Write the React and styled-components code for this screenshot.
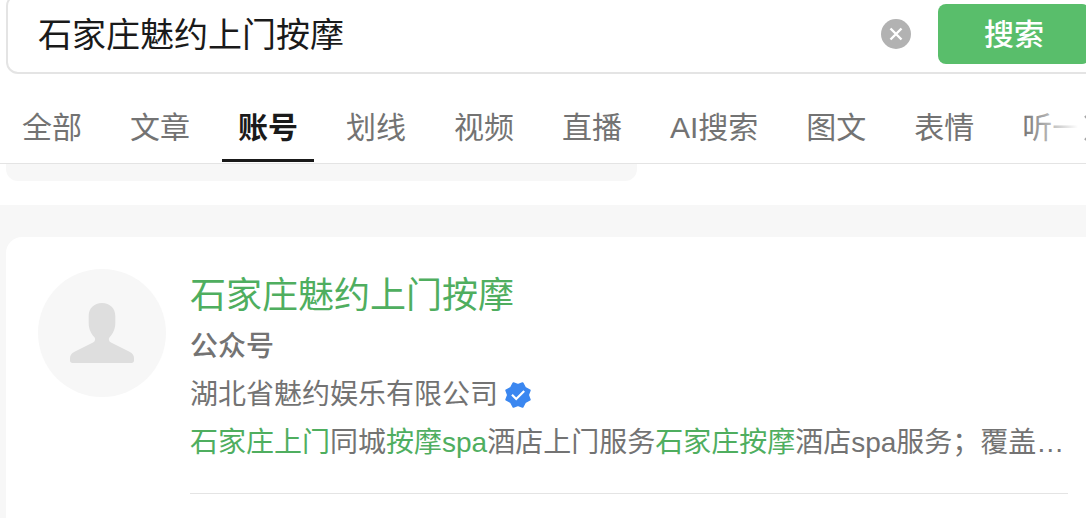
import styled, { createGlobalStyle } from "styled-components";

const GlobalStyle = createGlobalStyle`
  * {
    box-sizing: border-box;
  }

  body {
    margin: 0;
    overflow: hidden;
    background-color: #f7f7f7;
    color: #737373;
    font-family: "Liberation Sans", "Noto Sans CJK SC", sans-serif;
  }

  button,
  input {
    font-family: inherit;
    border: none;
    padding: 0;
    margin: 0;
  }
`;

const Page = styled.div`
  min-height: 100vh;
  display: flex;
  flex-direction: column;
`;

const Header = styled.header`
  background-color: #fff;
  border-bottom: 1px solid #e4e4e4;
`;

const SearchBox = styled.form`
  display: flex;
  align-items: center;
  height: 80px;
  margin: -6px -14px 0 6px;
  padding: 0 8px 0 30px;
  border: 2px solid #e4e4e4;
  border-radius: 12px;
`;

const SearchInput = styled.input`
  flex: 1;
  min-width: 0;
  height: 60px;
  padding-bottom: 4px;
  font-size: 34px;
  color: #1a1a1a;
  background: none;
  outline: none;
`;

const ClearButton = styled.button`
  display: flex;
  width: 30px;
  height: 30px;
  margin-right: 27px;
  background: none;
  cursor: pointer;
`;

const SearchButton = styled.button`
  width: 152px;
  height: 60px;
  padding-bottom: 4px;
  border-radius: 8px;
  background-color: #59be6b;
  color: #fff;
  font-size: 30px;
  font-weight: 500;
  cursor: pointer;
`;

const Tabs = styled.nav`
  position: relative;
  display: flex;
  gap: 16px;
  height: 89px;
  padding: 20px 0 1px 6px;
  overflow: hidden;
`;

const TabLink = styled.a`
  flex: none;
  padding: 0 16px;
  font-size: 30px;
  line-height: 68px;
  white-space: nowrap;
  text-decoration: none;
  color: ${({ $active }) => ($active ? "#1a1a1a" : "#737373")};
  font-weight: ${({ $active }) => ($active ? 700 : 400)};
  border-bottom: 3px solid ${({ $active }) => ($active ? "#1a1a1a" : "transparent")};
`;

const TabsFade = styled.div`
  position: absolute;
  top: 0;
  right: 8px;
  width: 56px;
  height: 86px;
  background: linear-gradient(to right, rgba(255, 255, 255, 0), #fff);
`;

const MoreButton = styled.button`
  position: absolute;
  top: 38px;
  right: -16px;
  display: flex;
  width: 24px;
  height: 32px;
  background-color: #fff;
  cursor: pointer;
`;

const Previous = styled.section`
  background-color: #fff;
  padding: 0 10px 24px 6px;
`;

const PreviousBlock = styled.div`
  width: 59%;
  height: 17px;
  border-radius: 0 0 12px 12px;
  background-color: #f7f7f7;
`;

const Card = styled.main`
  flex: 1;
  display: flex;
  gap: 24px;
  margin: 32px 0 0 6px;
  padding: 32px 18px 24px 32px;
  border-radius: 16px 0 0 0;
  background-color: #fff;
`;

const Avatar = styled.div`
  flex: none;
  width: 128px;
  height: 128px;
  border-radius: 50%;
  background-color: #f7f7f7;
`;

const Account = styled.article`
  flex: 1;
  min-width: 0;
  align-self: flex-start;
  padding-bottom: 26px;
  border-bottom: 1px solid #e4e4e4;
`;

const Title = styled.h1`
  margin: 0;
  font-size: 36px;
  line-height: 54px;
  font-weight: 400;
`;

const Mark = styled.em`
  font-style: normal;
  color: #4fae5f;
`;

const Line = styled.p`
  display: flex;
  align-items: center;
  gap: 6px;
  margin: 0;
  font-size: 28px;
  line-height: 48px;
  font-weight: ${({ $strong }) => ($strong ? 500 : 400)};
`;

const Description = styled.p`
  margin: 0;
  font-size: 28px;
  line-height: 48px;
  white-space: nowrap;
  overflow: hidden;
`;

const tabs = [
  "全部",
  "文章",
  "账号",
  "划线",
  "视频",
  "直播",
  "AI搜索",
  "图文",
  "表情",
  "听一",
];

export default function App() {
  return (
    <Page>
      <GlobalStyle />
      <Header>
        <SearchBox onSubmit={(e) => e.preventDefault()}>
          <SearchInput
            type="text"
            aria-label="搜索"
            defaultValue="石家庄魅约上门按摩"
          />
          <ClearButton type="reset" aria-label="清除">
            <ClearIcon />
          </ClearButton>
          <SearchButton type="submit">搜索</SearchButton>
        </SearchBox>
        <Tabs>
          {tabs.map((tab) => (
            <TabLink key={tab} href="#" $active={tab === "账号"}>
              {tab}
            </TabLink>
          ))}
          <TabsFade />
          <MoreButton type="button" aria-label="更多">
            <ChevronIcon />
          </MoreButton>
        </Tabs>
      </Header>
      <Previous>
        <PreviousBlock />
      </Previous>
      <Card>
        <Avatar>
          <PersonIcon />
        </Avatar>
        <Account>
          <Title>
            <Mark>石家庄魅约上门按摩</Mark>
          </Title>
          <Line $strong>公众号</Line>
          <Line>
            湖北省魅约娱乐有限公司
            <VerifiedIcon />
          </Line>
          <Description>
            <Mark>石家庄上门</Mark>同城<Mark>按摩spa</Mark>酒店上门服务
            <Mark>石家庄按摩</Mark>酒店spa服务；覆盖…
          </Description>
        </Account>
      </Card>
    </Page>
  );
}

function ClearIcon() {
  return (
    <svg width="30" height="30" viewBox="0 0 30 30">
      <circle cx="15" cy="15" r="15" fill="#b2b2b2" />
      <path d="M9.5 9.5l11 11M20.5 9.5l-11 11" stroke="#fff" strokeWidth="2.4" />
    </svg>
  );
}

function ChevronIcon() {
  return (
    <svg width="24" height="32" viewBox="0 0 24 32">
      <path d="M7 4l12 12-12 12" fill="none" stroke="#a6a6a6" strokeWidth="2.4" />
    </svg>
  );
}

function PersonIcon() {
  return (
    <svg width="128" height="128" viewBox="0 0 128 128">
      <path
        fill="#dedede"
        d="M64 34c-8 0-13.300 5.500-13.300 13v7.500c0 6 3 11 5.600 13.500 1.500 2 1 4.300-1.300 5.600L36.500 82.800C33.500 84.500 32 86.500 32 89v2.500c0 1.500 1 2.500 2.500 2.500h59c1.500 0 2.500-1 2.500-2.500V89c0-2.500-1.500-4.500-4.500-6.200L73 73.600c-2.300-1.300-2.800-3.600-1.300-5.600 2.600-2.500 5.600-7.500 5.600-13.500V47c0-7.500-5.300-13-13.300-13z"
      />
    </svg>
  );
}

function VerifiedIcon() {
  return (
    <svg width="28" height="28" viewBox="0 0 28 28">
      <path
        fill="#3b87f0"
        stroke="#3b87f0"
        strokeWidth="2"
        strokeLinejoin="round"
        d="M14 4L18.600 2.300L21.100 6.900L25.700 9.400L24 14L25.700 18.600L21.100 21.100L18.600 25.700L14 24L9.400 25.700L6.900 21.100L2.300 18.600L4 14L2.300 9.400L6.900 6.900L9.400 2.300Z"
      />
      <path d="M8 13.800l4.200 4.200 8-8" fill="none" stroke="#fff" strokeWidth="2.200" />
    </svg>
  );
}
